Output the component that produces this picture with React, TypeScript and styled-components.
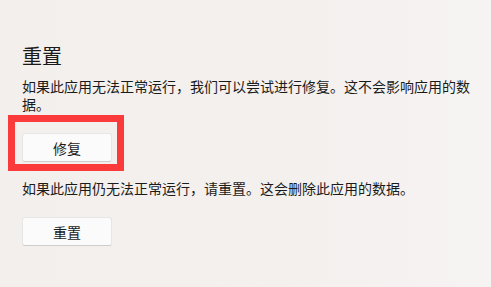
import styled, { createGlobalStyle } from 'styled-components'

const GlobalStyle = createGlobalStyle`
  html, body {
    margin: 0;
    padding: 0;
  }
  body {
    font-family: "Noto Sans CJK SC", "Noto Sans", sans-serif;
    color: #1b1b1b;
  }
`

const Page = styled.div`
  width: 491px;
  height: 287px;
  box-sizing: border-box;
  padding: 42px 21px 0 22px;
  background: linear-gradient(90deg, #f3efec 0%, #f4f0ee 60%, #f6f3f3 100%);
  overflow: hidden;
`

const Title = styled.h2`
  margin: 0;
  font-size: 20px;
  font-weight: 400;
  line-height: 28px;
`

const Description = styled.p<{ $top: number }>`
  margin: ${(p) => p.$top}px 0 0;
  font-size: 14px;
  line-height: 18px;
`

const ButtonWrap = styled.div<{ $top: number }>`
  position: relative;
  width: 90px;
  margin-top: ${(p) => p.$top}px;
`

const Button = styled.button`
  display: block;
  width: 90px;
  height: 29px;
  box-sizing: border-box;
  padding: 0;
  background: #fbfbfb;
  border: 1px solid #e6e6e6;
  border-bottom-color: #cdcdcd;
  border-radius: 3px;
  font-family: inherit;
  font-size: 14px;
  color: #1b1b1b;
`

// red annotation frame drawn over the repair button
const Highlight = styled.div`
  position: absolute;
  top: -18px;
  left: -14px;
  right: -12px;
  bottom: -9px;
  border: 7px solid #fb3b3b;
  pointer-events: none;
`

function App() {
  return (
    <>
      <GlobalStyle />
      <Page>
        <Title>重置</Title>
        <Description $top={7}>
          如果此应用无法正常运行，我们可以尝试进行修复。这不会影响应用的数据。
        </Description>
        <ButtonWrap $top={20}>
          <Button>修复</Button>
          <Highlight />
        </ButtonWrap>
        <Description $top={17}>如果此应用仍无法正常运行，请重置。这会删除此应用的数据。</Description>
        <ButtonWrap $top={20}>
          <Button>重置</Button>
        </ButtonWrap>
      </Page>
    </>
  )
}

export default App
